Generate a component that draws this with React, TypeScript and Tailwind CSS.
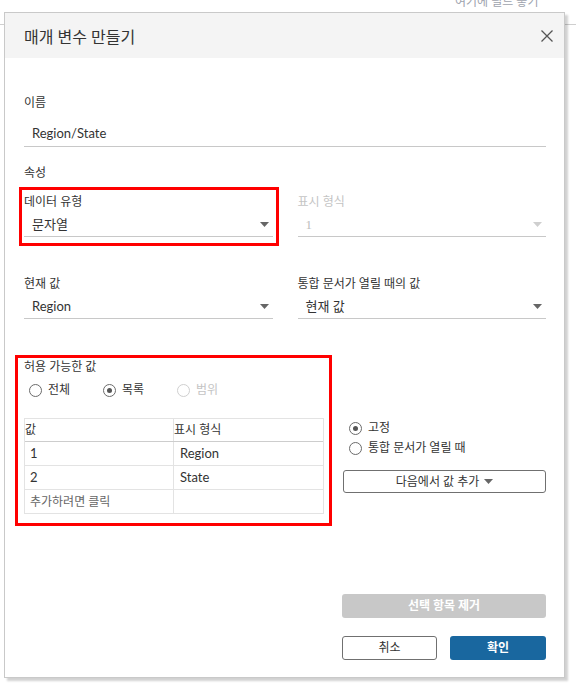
import React from 'react';

const Caret = ({ disabled }: { disabled?: boolean }) => (
  <svg width="9" height="5" viewBox="0 0 9 5" className="shrink-0">
    <path d="M0 0h9L4.5 5z" fill={disabled ? '#cfcfcf' : '#666'} />
  </svg>
);

const Radio = ({ label, checked, disabled }: { label: string; checked?: boolean; disabled?: boolean }) => (
  <div className={`flex items-center gap-[6px] ${disabled ? 'text-[#c4c4c4]' : 'text-[#333]'}`}>
    <span
      className={`flex h-[13px] w-[13px] items-center justify-center rounded-full border bg-white ${
        disabled ? 'border-[#cfcfcf]' : 'border-[#6b6b6b]'
      }`}
    >
      {checked && <span className="h-[5px] w-[5px] rounded-full bg-[#555]" />}
    </span>
    <span className="leading-[18px]">{label}</span>
  </div>
);

const Field = ({ label, value, disabled, serif }: { label: string; value: string; disabled?: boolean; serif?: boolean }) => (
  <div>
    <div className={`h-[18px] leading-[18px] ${disabled ? 'text-[#c4c4c4]' : 'text-[#333]'}`}>{label}</div>
    <div className="flex h-[26px] items-center justify-between border-b border-[#c8c8c8] pl-2 pr-1 pt-[2px]">
      <span
        className={`text-[13px] ${disabled ? 'text-[#bdbdbd]' : 'text-[#333]'} ${
          serif ? "font-['Liberation_Serif',serif]" : ''
        }`}
      >
        {value}
      </span>
      <Caret disabled={disabled} />
    </div>
  </div>
);

const rows = [
  { v: '1', d: 'Region' },
  { v: '2', d: 'State' },
];

export default function App() {
  return (
    <div className="relative h-[685px] w-[576px] overflow-hidden bg-white font-['Lato','Noto_Sans_CJK_KR',sans-serif] text-[12px] text-[#333]">
      {/* workspace behind the dialog */}
      <div className="absolute left-[455px] top-[-7px] text-[12px] leading-[18px] text-[#9ea3ad]">여기에 필드 놓기</div>
      <div className="absolute left-0 right-0 top-[24px] h-px bg-[#cfcfcf]" />

      <div className="absolute left-[4px] top-[12px] w-[561px] border border-[#c9c9c9] bg-white shadow-[3px_3px_2px_rgba(0,0,0,0.18)]">
        <div className="flex h-[45px] items-center justify-between bg-[#f4f4f4] pl-[19px] pr-[11px]">
          <h1 className="pt-[3px] text-[16px] font-normal leading-[20px] text-[#333]">매개 변수 만들기</h1>
          <svg width="12" height="12" viewBox="0 0 12 12">
            <path d="M0.5 0.5l11 11M11.5 0.5l-11 11" stroke="#555" strokeWidth="1.3" fill="none" />
          </svg>
        </div>

        <div className="pb-[17px] pl-[19px] pr-[18px] pt-[36px]">
          <div className="h-[18px] leading-[18px]">이름</div>
          <div className="mt-[10px] flex h-[25px] items-center border-b border-[#c8c8c8] pl-2 text-[13px]">Region/State</div>

          <div className="mt-[17px] h-[18px] leading-[18px]">속성</div>

          <div className="mt-[11px] grid grid-cols-2 gap-x-[25px] gap-y-[38px]">
            <div className="relative">
              <Field label="데이터 유형" value="문자열" />
              <div className="pointer-events-none absolute left-[-5px] top-[-6px] h-[59px] w-[260px] border-[3px] border-[#f00]" />
            </div>
            <Field label="표시 형식" value="1" disabled serif />
            <Field label="현재 값" value="Region" />
            <Field label="통합 문서가 열릴 때의 값" value="현재 값" />
          </div>

          <div className="mt-[39px] flex">
            <div className="relative w-[300px]">
              <div className="h-[18px] leading-[18px]">허용 가능한 값</div>
              <div className="mt-[4px] flex h-[20px] items-center pl-[5px]">
                <div className="w-[74px]">
                  <Radio label="전체" />
                </div>
                <div className="w-[74px]">
                  <Radio label="목록" checked />
                </div>
                <Radio label="범위" disabled />
              </div>

              <div className="mt-[18px] border border-[#e3e3e3]">
                <div className="flex h-[23px] border-b border-[#cdcdcd]">
                  <div className="flex w-[149px] items-center border-r border-[#e3e3e3]">값</div>
                  <div className="flex flex-1 items-center">표시 형식</div>
                </div>
                {rows.map((r) => (
                  <div key={r.v} className="flex h-[24px] border-b border-[#e3e3e3] text-[13px]">
                    <div className="flex w-[149px] items-center border-r border-[#e3e3e3] pl-[5px]">{r.v}</div>
                    <div className="flex flex-1 items-center pl-[6px]">{r.d}</div>
                  </div>
                ))}
                <div className="flex h-[23px]">
                  <div className="flex w-[149px] items-center border-r border-[#e3e3e3] pl-[5px] text-[#666]">추가하려면 클릭</div>
                  <div className="flex-1" />
                </div>
              </div>

              <div className="pointer-events-none absolute left-[-9px] top-[-3px] h-[171px] w-[317px] border-[3px] border-[#f00]" />
            </div>

            <div className="ml-[19px] flex-1 pt-[60px]">
              <div className="flex h-[20px] items-center pl-[6px]">
                <Radio label="고정" checked />
              </div>
              <div className="flex h-[20px] items-center pl-[6px]">
                <Radio label="통합 문서가 열릴 때" />
              </div>
              <button className="mt-[12px] flex h-[23px] w-full items-center justify-center gap-[5px] rounded-[3px] border border-[#707070] bg-white text-[12px] text-[#333]">
                다음에서 값 추가
                <Caret />
              </button>
            </div>
          </div>

          <div className="mt-[80px] flex justify-end">
            <button className="h-[24px] w-[204px] rounded-[3px] bg-[#c8c8c8] text-[12px] font-bold text-white">선택 항목 제거</button>
          </div>
          <div className="mt-[18px] flex justify-end gap-[13px]">
            <button className="h-[24px] w-[95px] rounded-[3px] border border-[#707070] bg-white text-[12px] text-[#333]">취소</button>
            <button className="h-[24px] w-[96px] rounded-[3px] bg-[#19679f] text-[12px] font-bold text-white">확인</button>
          </div>
        </div>
      </div>
    </div>
  );
}
